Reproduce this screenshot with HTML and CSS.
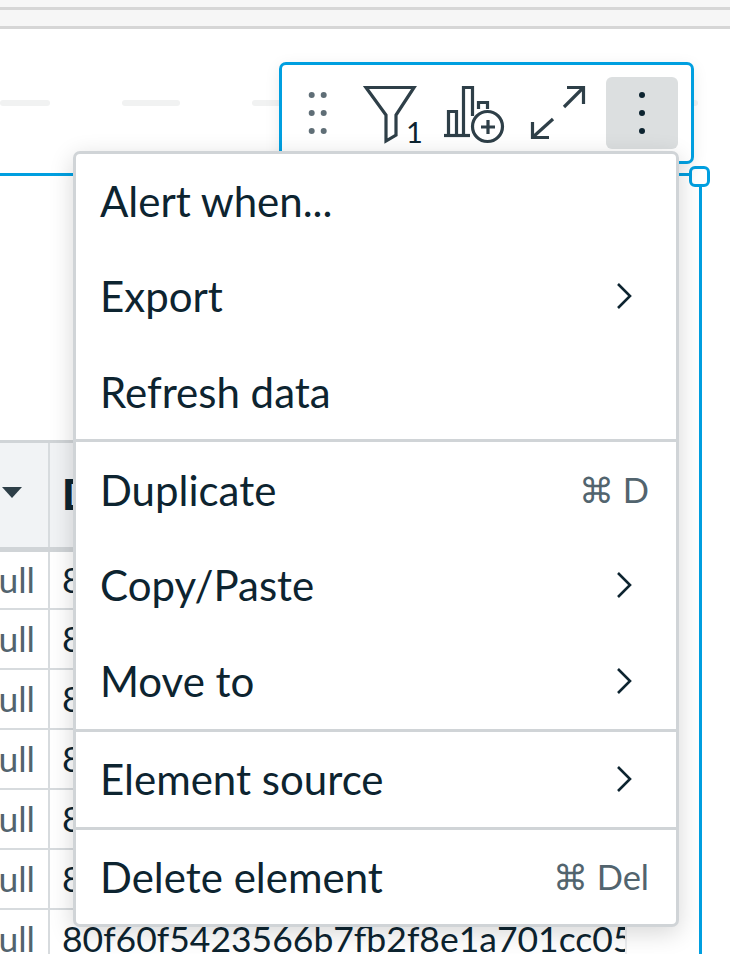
FILE: index.html
```html
<!DOCTYPE html>
<html lang="en">
<head>
<meta charset="utf-8">
<title>Element menu</title>
<link rel="stylesheet" href="styles.css">
</head>
<body>
<div class="page">
  <div class="topbars"><div class="bar bar-a"></div><div class="bar bar-b"></div></div>
  <div class="dashes"><span class="dash d1"></span><span class="dash d2"></span><span class="dash d3"></span></div>
  <section class="frame">
    <div class="table">
      <div class="row head">
        <div class="cell c1"><svg class="caret" viewBox="0 0 20 11"><path d="M0 0H20L10 11Z"/></svg></div>
        <div class="cell c2"><b class="hd">D</b></div>
      </div>
      <div class="row"><div class="cell c1"><span class="nul">null</span></div><div class="cell c2">80f60f5423566b7fb2f8e1a701cc05</div></div>
      <div class="row"><div class="cell c1"><span class="nul">null</span></div><div class="cell c2">80f60f5423566b7fb2f8e1a701cc05</div></div>
      <div class="row"><div class="cell c1"><span class="nul">null</span></div><div class="cell c2">80f60f5423566b7fb2f8e1a701cc05</div></div>
      <div class="row"><div class="cell c1"><span class="nul">null</span></div><div class="cell c2">80f60f5423566b7fb2f8e1a701cc05</div></div>
      <div class="row"><div class="cell c1"><span class="nul">null</span></div><div class="cell c2">80f60f5423566b7fb2f8e1a701cc05</div></div>
      <div class="row"><div class="cell c1"><span class="nul">null</span></div><div class="cell c2">80f60f5423566b7fb2f8e1a701cc05</div></div>
      <div class="row"><div class="cell c1"><span class="nul">null</span></div><div class="cell c2">80f60f5423566b7fb2f8e1a701cc05</div></div>
    </div>
    <span class="handle"></span>
  </section>

  <div class="toolbar">
    <svg class="ic grip" viewBox="0 0 20 48"><g fill="#5f6e76"><circle cx="3.7" cy="6" r="3"/><circle cx="15.7" cy="6" r="3"/><circle cx="3.7" cy="24" r="3"/><circle cx="15.7" cy="24" r="3"/><circle cx="3.7" cy="42" r="3"/><circle cx="15.7" cy="42" r="3"/></g></svg>
    <svg class="ic funnel" viewBox="0 0 60 62"><path d="M6 3.500H54L36 31V51L26 57V31Z" fill="none" stroke="#2e3f48" stroke-width="3.200"/></svg>
    <span class="count">1</span>
    <svg class="ic chart" viewBox="0 0 66 62"><g fill="none" stroke="#2e3f48" stroke-width="3.200"><path d="M4 51.500H30"/><path d="M8.500 51V27.500H16.500V51"/><path d="M23.500 51V3.500H32.500V32"/><path d="M38.500 25V18.500H47.500V25"/><circle cx="47.500" cy="42.500" r="15"/><path d="M48 36V50M41 43H55"/></g></svg>
    <svg class="ic expand" viewBox="0 0 60 60"><g fill="none" stroke="#2e3f48" stroke-width="3.200"><path d="M39 3.500H55.500V20"/><path d="M55 4L36 23"/><path d="M4.500 38V53.500H21"/><path d="M5 53L25 35"/></g></svg>
    <button class="more" type="button" aria-label="More"><svg class="dots" viewBox="0 0 8 44"><g fill="#0d2430"><circle cx="4" cy="4" r="3"/><circle cx="4" cy="22" r="3"/><circle cx="4" cy="40" r="3"/></g></svg></button>
  </div>

  <nav class="menu">
    <div class="group g1">
      <div class="item"><span>Alert when...</span></div>
      <div class="item"><span>Export</span><svg class="chev" viewBox="0 0 16 28"><path d="M2 2L14 14L2 26"/></svg></div>
      <div class="item"><span>Refresh data</span></div>
    </div>
    <div class="group g2">
      <div class="item"><span>Duplicate</span><span class="key">⌘ D</span></div>
      <div class="item"><span>Copy/Paste</span><svg class="chev" viewBox="0 0 16 28"><path d="M2 2L14 14L2 26"/></svg></div>
      <div class="item"><span>Move to</span><svg class="chev" viewBox="0 0 16 28"><path d="M2 2L14 14L2 26"/></svg></div>
    </div>
    <div class="group g3">
      <div class="item"><span>Element source</span><svg class="chev" viewBox="0 0 16 28"><path d="M2 2L14 14L2 26"/></svg></div>
    </div>
    <div class="group g3 last">
      <div class="item"><span>Delete element</span><span class="key">⌘ Del</span></div>
    </div>
  </nav>
</div>
</body>
</html>
```

FILE: styles.css
```css
* { box-sizing: border-box; }
html, body { margin: 0; padding: 0; background: #fff; }
.page {
  position: relative;
  width: 730px;
  height: 954px;
  overflow: hidden;
  font-family: Lato, "Open Sans", sans-serif;
  color: #0d2430;
}
.topbars { height: 29px; }
.bar { background: #f6f6f6; border-bottom: 3px solid #d6d6d6; }
.bar-a { height: 10px; }
.bar-b { height: 19px; }

.dashes { display: flex; height: 6px; margin-top: 71px; }
.dash { display: block; height: 6px; background: #f1f2f2; border-radius: 3px; }
.d1 { width: 50px; }
.d2 { width: 58px; margin-left: 72px; }
.d3 { width: 446px; margin-left: 72px; }

.frame {
  position: relative;
  width: 702px;
  height: 781px;
  margin-top: 67px;
  border-top: 3px solid #009fe0;
  border-right: 3px solid #009fe0;
  padding-top: 264px;
}
.handle {
  position: absolute;
  right: -11px;
  top: -10px;
  width: 21px;
  height: 21px;
  background: #fff;
  border: 3px solid #009fe0;
  border-radius: 6px;
}

.table { width: 627px; border-right: 2px solid #eceef0; }
.row {
  display: flex;
  height: 60px;
  border-bottom: 2px solid #d7dbde;
  font-size: 35.500px;
  line-height: 58px;
}
.row.head {
  height: 112px;
  background: #f1f3f5;
  border-top: 3px solid #d0d4d7;
  border-bottom: 5px solid #d0d4d7;
}
.row.head + .row { height: 58px; line-height: 56px; }
.cell { height: 100%; overflow: hidden; white-space: nowrap; }
.c1 {
  position: relative;
  display: flex;
  justify-content: flex-end;
  flex: 0 0 50px;
  border-right: 2px solid #d7dbde;
  padding-right: 13px;
}
.c2 { flex: 1; padding-left: 12px; min-width: 0; }
.nul { color: #52646e; }
.caret { width: 20px; height: 11px; fill: #2e3f48; position: absolute; left: 2px; top: 44px; }
.hd { font-size: 42px; font-weight: 900; line-height: 102px; }

.toolbar {
  position: absolute;
  left: 279px;
  top: 62px;
  width: 415px;
  height: 102px;
  background: #fff;
  border: 3px solid #009fe0;
  border-radius: 7px;
  box-shadow: 0 4px 16px rgba(0, 0, 0, .08);
}
.ic { position: absolute; }
.grip { left: 26px; top: 24px; width: 20px; height: 48px; }
.funnel { left: 78px; top: 19px; width: 60px; height: 62px; }
.count { position: absolute; left: 124px; top: 50px; font-size: 29px; line-height: 34px; color: #0d2430; }
.chart { left: 158px; top: 19px; width: 66px; height: 62px; }
.expand { left: 246px; top: 19px; width: 60px; height: 60px; }
.more {
  position: absolute;
  left: 324px;
  top: 12px;
  width: 72px;
  height: 72px;
  padding: 0;
  border: 0;
  border-radius: 6px;
  background: #dcdfe0;
}
.dots { display: block; width: 8px; height: 44px; margin: 14px auto; }

.menu {
  position: absolute;
  left: 73px;
  top: 151px;
  width: 606px;
  height: 776px;
  background: #fff;
  border: 3px solid #d0d4d7;
  border-radius: 7px;
  box-shadow: 0 6px 24px rgba(0, 0, 0, .16);
  display: flex;
  flex-direction: column;
}
.group { border-bottom: 3px solid #d0d4d7; }
.group.last { border-bottom: 0; }
.g1 { height: 289px; margin-top: -1px; }
.g2 { height: 290px; }
.g3 { height: 98px; }
.item {
  display: flex;
  justify-content: space-between;
  align-items: center;
  height: 95.5px;
  padding: 0 27px 0 24px;
  font-size: 42px;
  line-height: 48px;
  white-space: nowrap;
}
.chev { width: 16px; height: 28px; margin-right: 17px; fill: none; stroke: #0d2430; stroke-width: 2.600; }
.key { font-size: 34.500px; color: #52646e; }
```
